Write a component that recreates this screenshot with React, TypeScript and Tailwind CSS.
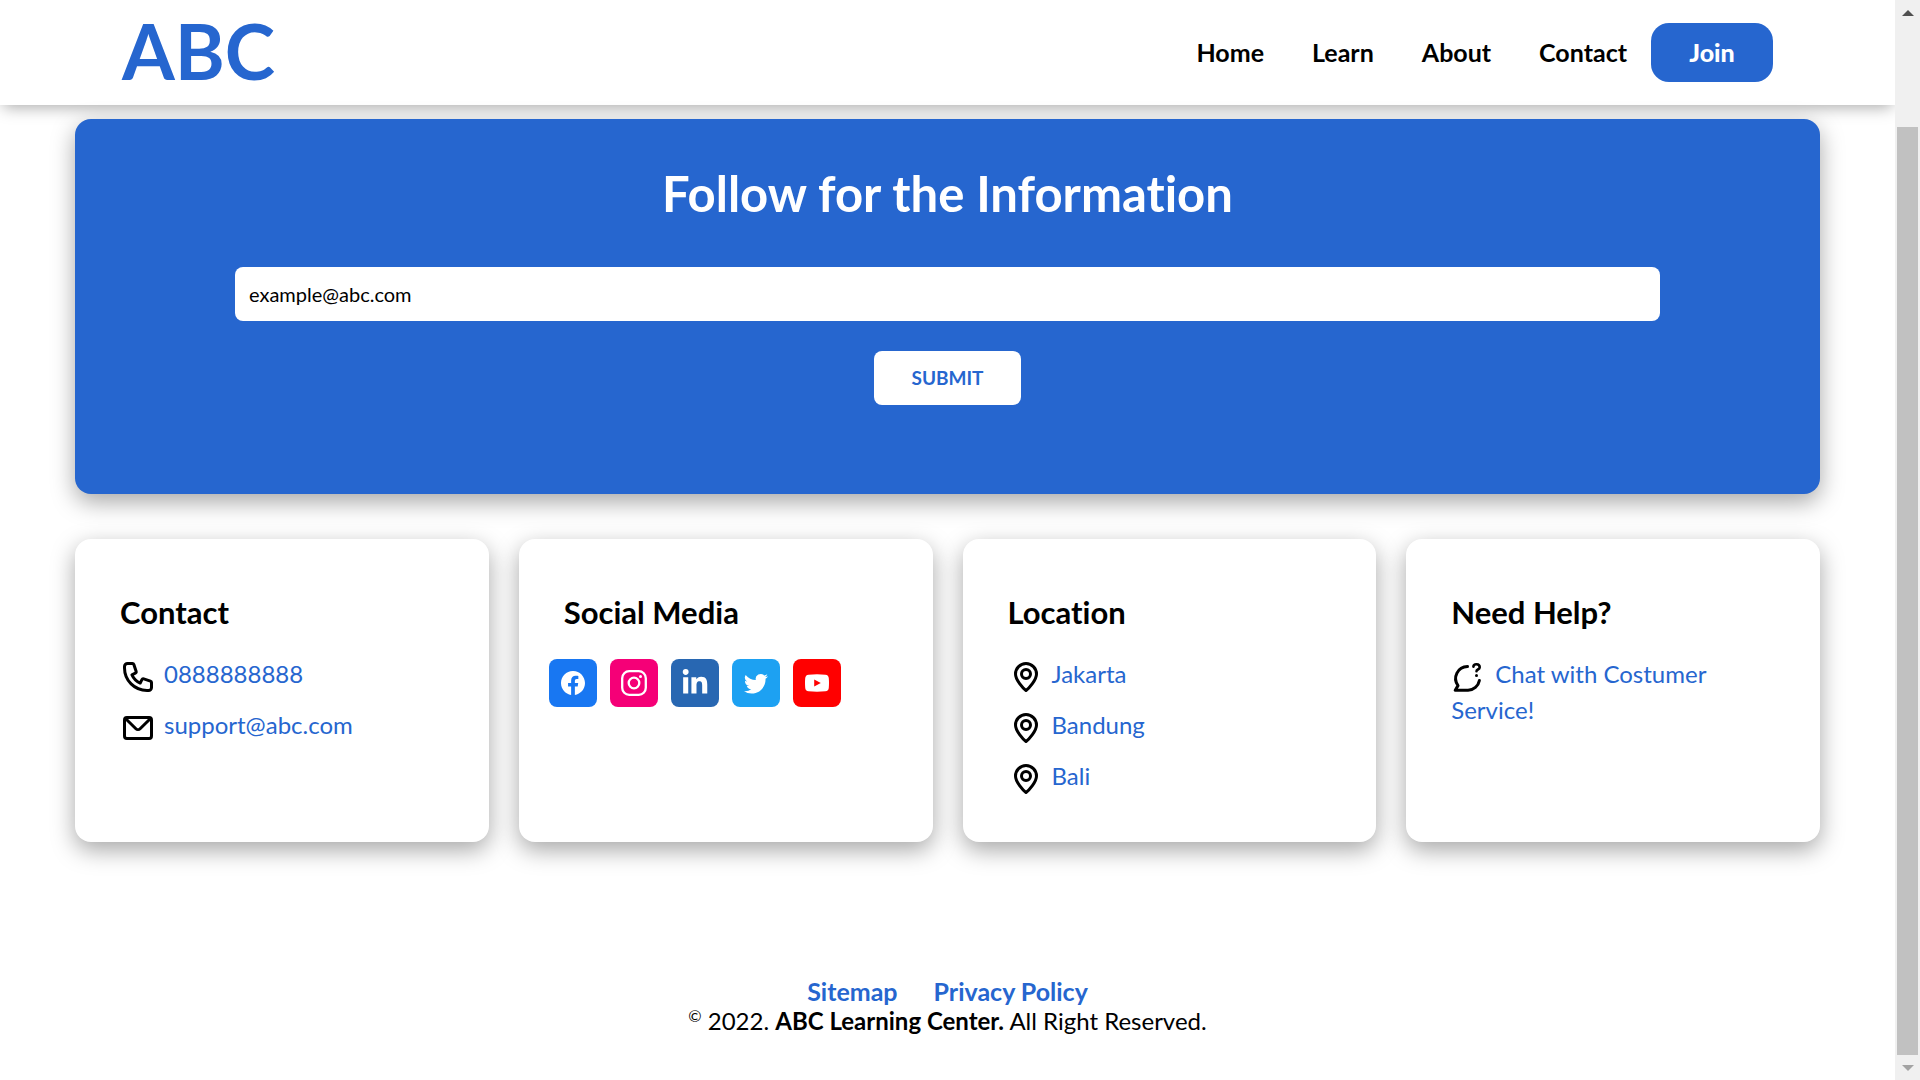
import type { ReactNode } from "react";
import { BsFacebook, BsTwitter } from "react-icons/bs";
import { FaLinkedinIn } from "react-icons/fa";

const navLinks = ["Home", "Learn", "About", "Contact"];
const cities = ["Jakarta", "Bandung", "Bali"];

function LineIcon({ children }: { children: ReactNode }) {
  return (
    <svg
      viewBox="0 0 24 24"
      className="mr-2 inline-block size-9 align-middle text-black"
      fill="none"
      stroke="currentColor"
      strokeWidth="2"
      strokeLinecap="round"
      strokeLinejoin="round"
      aria-hidden="true"
    >
      {children}
    </svg>
  );
}

function PhoneIcon() {
  return (
    <LineIcon>
      <path d="M3 5a2 2 0 0 1 2-2h3.28a1 1 0 0 1 .948.684l1.498 4.493a1 1 0 0 1-.502 1.21l-2.257 1.13a11.042 11.042 0 0 0 5.516 5.516l1.13-2.257a1 1 0 0 1 1.21-.502l4.493 1.498a1 1 0 0 1 .684.949V19a2 2 0 0 1-2 2h-1C9.716 21 3 14.284 3 6V5z" />
    </LineIcon>
  );
}

function MailIcon() {
  return (
    <LineIcon>
      <rect x="3" y="5" width="18" height="14" rx="1.6" />
      <path d="M4 6l6.6 6.5a2 2 0 0 0 2.8 0L20 6" />
    </LineIcon>
  );
}

function PinIcon() {
  return (
    <LineIcon>
      <path d="M19 10c0 3.976-5 9.5-7 11-2-1.5-7-7.024-7-11a7 7 0 0 1 14 0z" />
      <circle cx="12" cy="10" r="3" />
    </LineIcon>
  );
}

function ChatIcon() {
  return (
    <svg
      viewBox="0 0 36 36"
      className="mr-2 inline-block size-9 align-middle text-black"
      fill="none"
      stroke="currentColor"
      strokeWidth="3"
      strokeLinecap="round"
      strokeLinejoin="round"
      aria-hidden="true"
    >
      <path d="M16.5 7.5A12 12 0 0 0 7 26.6L4.2 31.2H17A12 12 0 0 0 28.4 21.4" />
      <path d="M22.4 7.6c.2-3.2 6.3-3.3 6.3.6 0 2.6-3.2 2-3.2 4" strokeWidth="2.6" />
      <circle cx="25.5" cy="16.4" r="1.5" fill="currentColor" stroke="none" />
    </svg>
  );
}

function InstagramIcon() {
  return (
    <svg viewBox="0 0 26 26" className="size-[26px]" fill="none" stroke="currentColor" strokeWidth="2.3" aria-hidden="true">
      <rect x="1.2" y="1.2" width="23.6" height="23.6" rx="7" />
      <circle cx="13" cy="13" r="5.3" />
      <circle cx="19.5" cy="6.5" r="1.5" fill="currentColor" stroke="none" />
    </svg>
  );
}

function YoutubeIcon() {
  return (
    <svg viewBox="0 0 24 24" className="size-6" aria-hidden="true">
      <path
        fill="currentColor"
        fillRule="evenodd"
        d="M3.6 3.7Q12 3 20.4 3.7 23.6 4 23.8 7.3q.4 4.7 0 9.4-.2 3.3-3.4 3.6-8.4.7-16.8 0Q.4 20 .2 16.7q-.4-4.7 0-9.4Q.4 4 3.6 3.7ZM9.2 8.6v6.8l6.6-3.4Z"
      />
    </svg>
  );
}

function Card({ title, children }: { title: string; children: ReactNode }) {
  return (
    <section className="rounded-2xl bg-white px-[45px] pt-[53px] pb-[45px] shadow-[0_8px_23px_rgba(0,0,0,0.35)]">
      <h3 className="mb-[27px] text-[31px] leading-10 font-bold">{title}</h3>
      {children}
    </section>
  );
}

function LinkList({ children }: { children: ReactNode }) {
  return <ul className="flex flex-col gap-[15px] text-2xl leading-[30px] text-[#2666cf]">{children}</ul>;
}

function SocialLink({ label, color, children }: { label: string; color: string; children: ReactNode }) {
  return (
    <li>
      <a href="#" aria-label={label} className={`flex size-12 items-center justify-center rounded-lg text-white ${color}`}>
        {children}
      </a>
    </li>
  );
}

function Scrollbar() {
  return (
    <div className="sticky top-0 flex h-screen w-[25px] shrink-0 flex-col items-center justify-between bg-[#f0f0f0]" aria-hidden="true">
      <div className="flex h-[25px] items-center">
        <svg viewBox="0 0 12 6" className="h-1.5 w-3">
          <path d="M6 0l6 6H0z" fill="#505050" />
        </svg>
      </div>
      <div className="mt-[102px] w-[21px] grow bg-[#c1c1c1]" />
      <div className="flex h-[25px] items-center">
        <svg viewBox="0 0 12 6" className="h-1.5 w-3">
          <path d="M0 0h12L6 6z" fill="#a3a3a3" />
        </svg>
      </div>
    </div>
  );
}

export default function App() {
  return (
    <div className="flex min-h-screen bg-white font-['Lato',sans-serif] text-black [font-variant-ligatures:none]">
      <div className="min-w-0 grow overflow-x-clip">
        <header className="flex h-[105px] items-center justify-between bg-white px-[122px] shadow-[0_5px_15px_-3px_rgba(0,0,0,0.35)]">
          <a href="#" className="pb-1 text-[76px] leading-[90px] font-bold text-[#2666cf]">
            ABC
          </a>
          <nav className="flex items-center text-[25px] font-bold">
            {navLinks.map((label) => (
              <a key={label} href="#" className="px-6">
                {label}
              </a>
            ))}
            <button type="button" className="h-[59px] w-[122px] rounded-[18px] bg-[#2666cf] font-black text-white">
              Join
            </button>
          </nav>
        </header>

        <main className="px-[75px] pt-3.5">
          <section className="rounded-2xl bg-[#2666cf] px-40 pt-11 pb-[89px] shadow-[0_8px_23px_rgba(0,0,0,0.35)]">
            <h2 className="mb-11 text-center text-[49px] leading-[60px] font-bold text-white">Follow for the Information</h2>
            <form className="flex flex-col items-center gap-[30px]" onSubmit={(event) => event.preventDefault()}>
              <input
                type="email"
                aria-label="Email address"
                placeholder="example@abc.com"
                className="h-[54px] w-full rounded-lg bg-white px-3.5 text-xl text-black placeholder:text-black"
              />
              <button type="submit" className="h-[54px] w-[147px] rounded-lg bg-white text-[19px] font-bold text-[#2666cf]">
                SUBMIT
              </button>
            </form>
          </section>

          <div className="mt-[45px] grid grid-cols-4 gap-[30px]">
            <Card title="Contact">
              <LinkList>
                <li>
                  <PhoneIcon />
                  <a href="#">0888888888</a>
                </li>
                <li>
                  <MailIcon />
                  <a href="#">support@abc.com</a>
                </li>
              </LinkList>
            </Card>
            <Card title="Social Media">
              <ul className="-ml-[15px] flex gap-[13px]">
                <SocialLink label="Facebook" color="bg-[#1877f2]">
                  <BsFacebook className="size-6" />
                </SocialLink>
                <SocialLink label="Instagram" color="bg-[#f50077]">
                  <InstagramIcon />
                </SocialLink>
                <SocialLink label="LinkedIn" color="bg-[#2867b2]">
                  <FaLinkedinIn className="size-7" />
                </SocialLink>
                <SocialLink label="Twitter" color="bg-[#1da1f2]">
                  <BsTwitter className="size-6" />
                </SocialLink>
                <SocialLink label="YouTube" color="bg-[#ff0000]">
                  <YoutubeIcon />
                </SocialLink>
              </ul>
            </Card>
            <Card title="Location">
              <LinkList>
                {cities.map((city) => (
                  <li key={city}>
                    <PinIcon />
                    <a href="#">{city}</a>
                  </li>
                ))}
              </LinkList>
            </Card>
            <Card title="Need Help?">
              <LinkList>
                <li>
                  <ChatIcon />
                  <a href="#">Chat with Costumer Service!</a>
                </li>
              </LinkList>
            </Card>
          </div>
        </main>

        <footer className="pt-[135px] pb-11 text-center text-2xl leading-[29px]">
          <div className="flex justify-center gap-9 text-[25px] leading-[29px] font-bold text-[#2666cf]">
            <a href="#">Sitemap</a>
            <a href="#">Privacy Policy</a>
          </div>
          <p>
            <sup className="text-base leading-none">©</sup> 2022. <b>ABC Learning Center.</b> All Right Reserved.
          </p>
        </footer>
      </div>
      <Scrollbar />
    </div>
  );
}
